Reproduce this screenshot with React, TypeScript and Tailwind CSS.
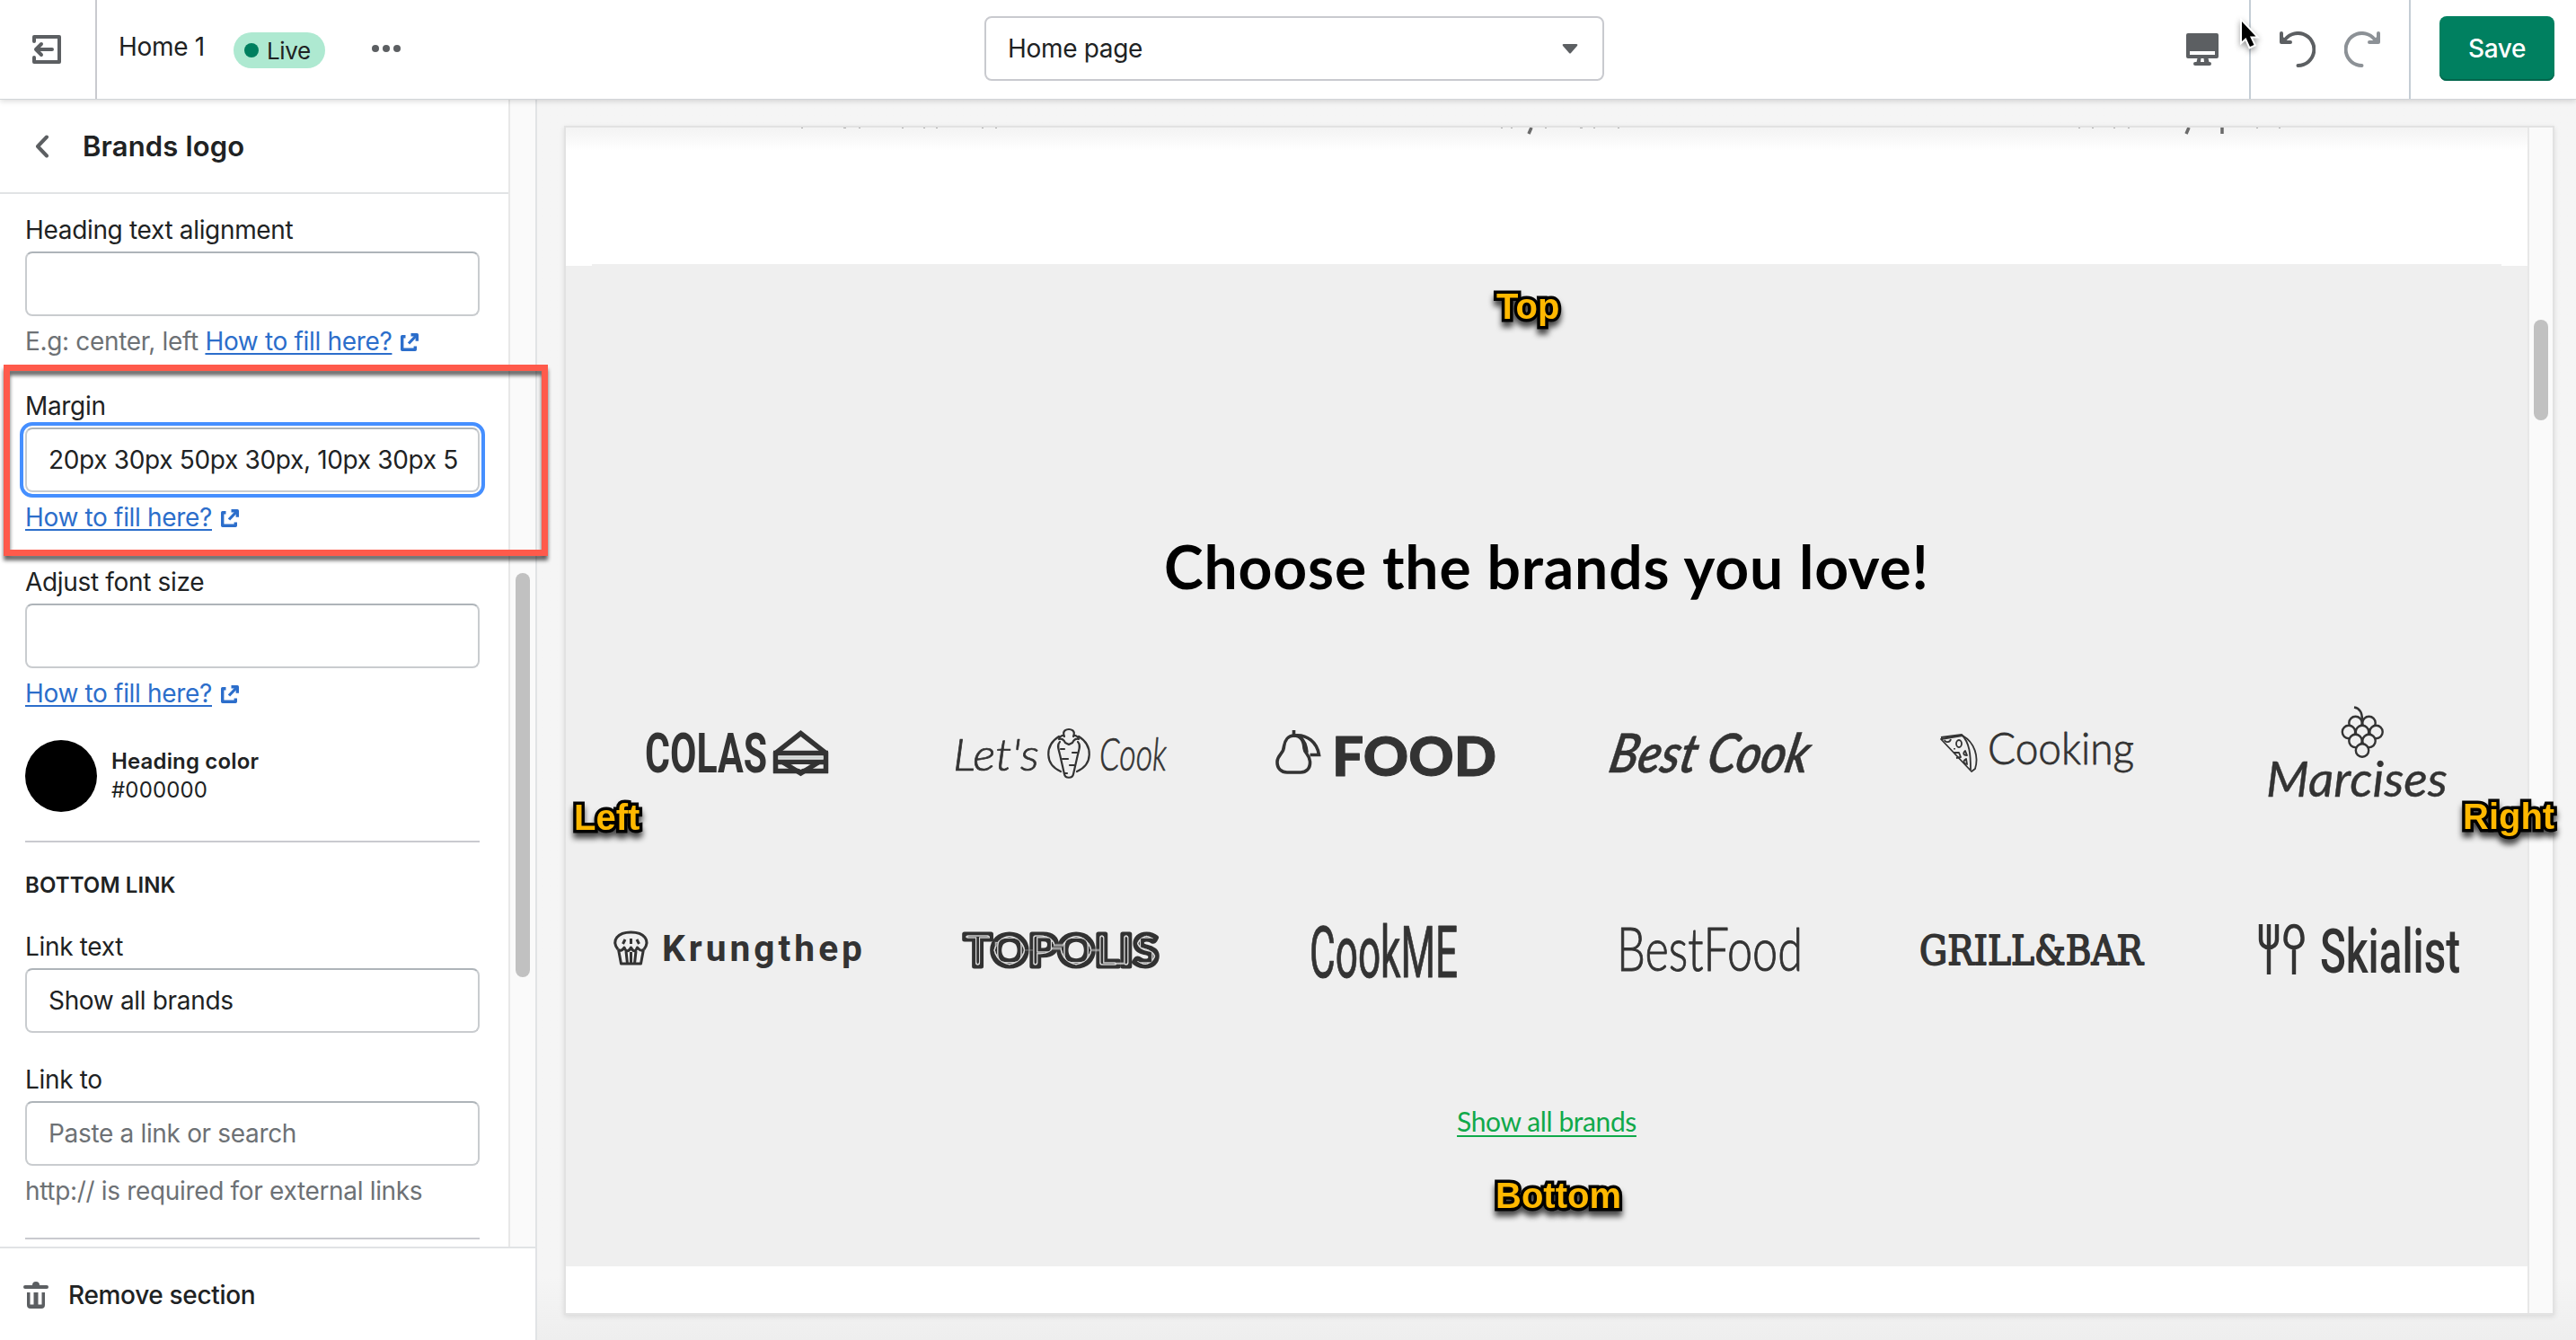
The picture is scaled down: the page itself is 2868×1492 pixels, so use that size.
import type { ReactNode } from "react";

const INK = "#333333";

const callouts = [
  { text: "Top", place: "left-[1666px] top-[321px]" },
  { text: "Left", place: "left-[639px] top-[890px]" },
  { text: "Right", place: "left-[2742px] top-[889px]" },
  { text: "Bottom", place: "left-[1665px] top-[1311px]" },
];

function App() {
  return (
    <div className="relative flex h-[1492px] w-[2868px] flex-col overflow-hidden bg-[#f5f5f5] font-[Inter,sans-serif] text-[28px] leading-[40px] tracking-[-0.33px] text-[#202223]">
      <TopBar />
      <div className="flex min-h-0 flex-1">
        <Sidebar />
        <Preview />
      </div>

      <div className="absolute left-[4px] top-[406px] h-[213px] w-[606px] border-[7px] border-[#ff5a4b] drop-shadow-[0_5px_2px_rgba(0,0,0,0.6)]"></div>
      {callouts.map((c) => (
        <div
          key={c.text}
          className={
            "absolute font-['Liberation_Sans',sans-serif] text-[40px] font-bold leading-none tracking-normal text-[#ffb800] drop-shadow-[0_6px_3px_rgba(0,0,0,0.7)] [-webkit-text-stroke:7px_black] [paint-order:stroke_fill] [stroke-linejoin:round] " +
            c.place
          }
        >
          {c.text}
        </div>
      ))}
      <svg
        className="absolute left-[2488px] top-[16px] z-20 drop-shadow-[0_3px_3px_rgba(0,0,0,0.4)]"
        width="34"
        height="44"
        viewBox="0 0 34 44"
      >
        <path
          d="M8 8v22l4.500-4 4.500 10 4.500-2-4.500-9.500h6.500z"
          fill="#000"
          stroke="#fff"
          strokeWidth="4"
          paintOrder="stroke"
        />
      </svg>
    </div>
  );
}

function TopBar() {
  return (
    <div className="z-10 flex h-[111px] shrink-0 border-b border-[#d2d5d8] bg-white shadow-[0_2px_6px_rgba(0,0,0,0.14)]">
      <div className="flex w-[108px] items-center border-r-2 border-[#c9cacf] pl-[36px]">
        <svg width="32" height="32" viewBox="0 0 32 32" fill="none" stroke="#5c5f62" strokeWidth="4" strokeLinecap="round" strokeLinejoin="round">
          <path d="M2 7V2h28v28H2v-5M22 16H4M10 10l-6 6 6 6" />
        </svg>
      </div>
      <div className="flex w-[988px] pl-[24px]">
        <div className="w-[97px] pt-[32px]">Home 1</div>
        <div className="ml-[31px] mt-[36px] flex h-[40px] w-[102px] items-center gap-[9px] rounded-full bg-[#aee9d1] pl-[12px] text-[26px]">
          <div className="h-[16px] w-[16px] rounded-full bg-[#007f5f]"></div>
          <div className="pt-[1px]">Live</div>
        </div>
        <div className="ml-[52px] mt-[50px] flex gap-1">
          <div className="h-[8px] w-[8px] rounded-full bg-[#5c5f62]"></div>
          <div className="h-[8px] w-[8px] rounded-full bg-[#5c5f62]"></div>
          <div className="h-[8px] w-[8px] rounded-full bg-[#5c5f62]"></div>
        </div>
      </div>
      <div className="mt-[18px] flex h-[72px] w-[690px] items-center justify-between rounded-lg border-2 border-[#c9cacf] pl-[24px] pr-[27px]">
        <span>Home page</span>
        <svg width="18" height="11" viewBox="0 0 18 11" fill="#5c5f62">
          <path d="M2 0h14q2 0 1 2l-7 8q-1 1-2 0L1 2Q0 0 2 0z" />
        </svg>
      </div>
      <div className="ml-auto flex">
        <div className="flex items-center border-r-2 border-[#c4cdd5] pr-[34px]">
          <svg width="36" height="36" viewBox="0 0 36 36" fill="#5c5f62">
            <path
              fillRule="evenodd"
              d="M2 0h32q2 0 2 2v24q0 2-2 2h-9.500l1 4H26q2 0 2 2t-2 2H10q-2 0-2-2t2-2h1.500l1-4H2q-2 0-2-2V2q0-2 2-2zM4 20v4h28v-4zM16.500 28l-.5 4h4l-.5-4z"
            />
          </svg>
        </div>
        <div className="flex items-center gap-[32px] border-r-2 border-[#c4cdd5] px-[32px]">
          <UndoIcon color="#5c5f62" />
          <div className="-scale-x-100">
            <UndoIcon color="#8c9196" />
          </div>
        </div>
        <div className="ml-[32px] mr-[24px] mt-[18px] flex h-[72px] w-[128px] items-center justify-center rounded-lg bg-[#008060] font-medium text-white shadow-[inset_0_-2px_0_#00664c]">
          Save
        </div>
      </div>
    </div>
  );
}

function UndoIcon({ color }: { color: string }) {
  return (
    <svg className="block" width="40" height="40" viewBox="0 0 40 40" fill="none" stroke={color} strokeWidth="4" strokeLinecap="round" strokeLinejoin="round">
      <path d="M20.500 38A18 18 0 1 0 4.500 11.500" />
      <path d="M2 2v10h10M2.500 7.500L7 12" />
    </svg>
  );
}

function Sidebar() {
  return (
    <div className="flex w-[598px] shrink-0 flex-col border-r-2 border-[#e1e3e5] bg-white">
      <div className="flex min-h-0 flex-1">
        <div className="flex w-[566px] flex-col overflow-hidden">
          <div className="flex h-[105px] shrink-0 items-center border-b-2 border-[#e1e3e5] pl-[39px]">
            <svg width="16" height="26" viewBox="0 0 16 26" fill="none" stroke="#5c5f62" strokeWidth="4" strokeLinecap="round" strokeLinejoin="round">
              <path d="M13 2.500L3 13l10 10.500" />
            </svg>
            <div className="ml-[37px] text-[31px] font-semibold tracking-[0.15px]">Brands logo</div>
          </div>
          <div className="flex flex-col gap-8 pl-[28px] pr-[32px] pt-[20px]">
            <Field label="Heading text alignment">
              E.g: center, left <HelpLink />
            </Field>
            <Field label="Margin" value="20px 30px 50px 30px, 10px 30px 5" focused>
              <HelpLink />
            </Field>
            <Field label="Adjust font size">
              <HelpLink />
            </Field>
            <div className="flex h-[80px] items-center">
              <div className="h-[80px] w-[80px] rounded-full bg-black"></div>
              <div className="ml-[16px] text-[24px] leading-[32px] tracking-[0.15px]">
                <div className="font-semibold">Heading color</div>
                <div>#000000</div>
              </div>
            </div>
            <div className="h-[2px] bg-[#c9cacf]"></div>
            <div className="text-[24px] font-semibold leading-[32px] tracking-[0.1px]">BOTTOM LINK</div>
            <Field label="Link text" value="Show all brands" />
            <Field label="Link to" placeholder="Paste a link or search">
              http:// is required for external links
            </Field>
            <div className="h-[2px] bg-[#c9cacf]"></div>
          </div>
        </div>
        <div className="flex w-[30px] justify-end border-l-2 border-[#e8e8e8] bg-[#fafafa] pr-[6px]">
          <div className="mt-[527px] h-[450px] w-[16px] rounded-full bg-[#c1c1c1]"></div>
        </div>
      </div>
      <div className="flex h-[104px] shrink-0 items-center border-t-2 border-[#e1e3e5] pl-[26px] pt-[2px]">
        <svg width="28" height="31" viewBox="0 0 28 31" fill="#5c5f62">
          <path d="M10 4q0-4 4-4t4 4h8q2 0 2 2t-2 2H2q-2 0-2-2t2-2z" />
          <path d="M4 12h3.500v13.500h4V12h3v13.500h0V12h2v13.500h4V12H24v14q0 4-4 4H8q-4 0-4-4z" />
        </svg>
        <div className="ml-[22px] font-medium">Remove section</div>
      </div>
    </div>
  );
}

type FieldProps = {
  label: string;
  value?: string;
  placeholder?: string;
  focused?: boolean;
  children?: ReactNode;
};

function Field(props: FieldProps) {
  return (
    <div className="flex flex-col">
      <div>{props.label}</div>
      <div
        className={
          "mt-1 flex h-[72px] items-center whitespace-nowrap rounded-lg border-2 border-[#c9cccf] border-t-[#aeb4b9] bg-white px-[24px] " +
          (props.focused ? "outline-4 outline-offset-2 outline-[#458fff]" : "")
        }
      >
        {props.value}
        <span className="text-[#6d7175]">{props.placeholder}</span>
      </div>
      {props.children && (
        <div className="mt-2 whitespace-nowrap text-[#6d7175]">{props.children}</div>
      )}
    </div>
  );
}

function HelpLink() {
  return (
    <span className="text-[#2c6ecb]">
      <span className="underline decoration-2 underline-offset-[3px]">How to fill here?</span>
      <svg className="ml-[10px] inline-block align-[-1px]" width="20" height="20" viewBox="0 0 20 20" fill="none" stroke="#2c6ecb" strokeWidth="3.400" strokeLinejoin="round">
        <path d="M5.500 3.700H1.700v14.600h14.600v-3.800M11.500 1.700h6.800v7" />
        <path d="M18 2L9 11.500" strokeWidth="3.200" />
      </svg>
    </span>
  );
}

function Preview() {
  return (
    <div className="flex flex-1 bg-linear-to-b from-[#f5f5f5] from-95% to-[#eeeeee] pb-[28px] pl-[30px] pr-[24px] pt-[29px]">
      <div className="flex flex-1 border-2 border-[#e2e2e2] bg-white shadow-[0_2px_6px_rgba(0,0,0,0.1)]">
        <div className="flex flex-1 flex-col">
          <div className="h-[152px] bg-linear-to-b from-[#f3f3f3] to-white to-[26px]">
            {/* descenders of the row that is scrolled out above */}
            <svg width="2184" height="10" viewBox="0 0 2184 10" stroke="#6b6b6b" strokeWidth="3.500">
              <path d="M1075 0l-3 7M1807 0l-3 7M1844 0v7" />
              <path d="M262 .5h2M309 .5h3M326 .5h2M374 .5h2M398 .5h2M412 .5h2M463 .5h2M478 .5h2M1041 .5h2M1052 .5h2M1090 .5h2M1129 .5h3M1144 .5h2M1171 .5h2M1684 .5h2M1699 .5h2M1723 .5h2M1739 .5h2M1882 .5h2M1907 .5h2" strokeWidth="1" opacity="0.500" />
            </svg>
          </div>
          <div className="mx-[29px] h-[2px] bg-[#efefef]"></div>
          <div className="flex h-[1114px] flex-col items-center bg-[#efefef] font-[Lato,sans-serif] tracking-normal">
            <div className="mt-[290px] whitespace-nowrap text-[66px] font-bold leading-[90px] tracking-[0.85px] text-black">
              Choose the brands you love!
            </div>
            <div className="mt-[54px] grid grid-cols-6">
              <Colas />
              <LetsCook />
              <Food />
              <BestCook />
              <Cooking />
              <Marcises />
              <Krungthep />
              <Topolis />
              <CookMe />
              <BestFood />
              <GrillBar />
              <Skialist />
            </div>
            <div className="mt-[60px] text-[30px] leading-[40px] tracking-[-0.4px] text-[#10a94a] underline decoration-2 underline-offset-[4px]">
              Show all brands
            </div>
          </div>
        </div>
        <div className="flex w-[28px] justify-center border-l-2 border-[#e8e8e8] bg-[#fafafa]">
          <div className="mt-[214px] h-[112px] w-[16px] rounded-full bg-[#c1c1c1]"></div>
        </div>
      </div>
    </div>
  );
}

// Every logo shares one sheet: 361 x 219 per cell, origin at 638,730.
function Logo({ box, children }: { box: string; children: ReactNode }) {
  return (
    <svg className="overflow-visible" width="361" height="219" viewBox={box} fill={INK}>
      {children}
    </svg>
  );
}

type WordProps = {
  x: number;
  y: number;
  w: number;
  size: number;
  className: string;
  bold?: number;
  children: string;
};

// w is the drawn width of the word, bold thickens the strokes a little
function Word({ x, y, w, size, className, bold, children }: WordProps) {
  return (
    <text
      x={x}
      y={y}
      fontSize={size}
      textLength={w}
      lengthAdjust="spacingAndGlyphs"
      stroke={bold ? INK : undefined}
      strokeWidth={bold}
      strokeLinejoin="round"
      className={className}
    >
      {children}
    </text>
  );
}

function Colas() {
  return (
    <Logo box="638 730 361 219">
      <Word x={717} y={859.5} w={136} size={61} className="font-[Roboto,sans-serif] font-bold">COLAS</Word>
      <g fill="none" stroke={INK} strokeWidth="5.500">
        <path d="M862.500 861V838.500L890.500 816.500L918.500 838.500V861" />
        <path d="M860 838.500h61M860 848.500h61M860 858.500h61" />
        <path d="M871 849l19.500 12 19.500-12" />
      </g>
      <path d="M881 851h19l-9.500 6z" fill="#efefef" />
      <path d="M865 843.500h51" stroke="#c9d0cd" strokeWidth="2" />
    </Logo>
  );
}

function LetsCook() {
  return (
    <Logo box="999 730 361 219">
      <Word x={1060} y={858} w={96} size={50} bold={0.7} className="font-[Lato,sans-serif] font-light italic">Let's</Word>
      <Word x={1223} y={858} w={75} size={52} bold={0.7} className="font-[Lato,sans-serif] font-light italic">Cook</Word>
      <g fill="none" stroke={INK} strokeWidth="2.200" strokeLinejoin="round" strokeLinecap="round">
        <path d="M1178 820c-16 10-16 31 2 39M1200 820c16 10 16 31-2 39" />
        <path d="M1179 826c-4 4-1 9 0 14l5 22c1 5 9 5 10 0l5-22c1-5 4-10 0-14" />
        <path d="M1178 823c1-4 5-5 6-3-3-7 3-8 5-8s8 1 5 8c1-2 5-1 6 3-3-1-5 0-7 4l-4 2-4-2c-2-4-4-5-7-4z" />
        <path d="M1180 834h4M1193 838h5M1182 845h6M1190 852h5M1184 861h3" />
      </g>
    </Logo>
  );
}

function Food() {
  return (
    <Logo box="1360 730 361 219">
      <Word x={1482} y={863.5} w={183} size={61} bold={1} className="font-[Lato,sans-serif] font-black">FOOD</Word>
      <g fill="none" stroke={INK} strokeWidth="3.600">
        <path d="M1439.500 819c-6 0-10 5-11 12 0 8-7 9-7.500 17-.3 8 5 12 11 12h15c6 0 11-4 10.500-12-.5-8-6-9-6.500-15-.5-8-4.500-14-11.500-14z" />
        <path d="M1439.500 813v6c15-2 26 8 28 21.500h-10M1446 820c6 6 7 10 8 18" />
      </g>
    </Logo>
  );
}

function BestCook() {
  return (
    <Logo box="1721 730 361 219">
      <g transform="translate(1788 860) skewX(-12)">
        <Word x={0} y={0} w={222} size={60} bold={0.5} className="font-[Lato,sans-serif] font-semibold italic">Best Cook</Word>
      </g>
    </Logo>
  );
}

function Cooking() {
  return (
    <Logo box="2082 730 361 219">
      <Word x={2212} y={850.5} w={163} size={49} bold={0.8} className="font-[Lato,sans-serif] font-light">Cooking</Word>
      <g fill="none" stroke={INK} strokeWidth="1.800" strokeLinejoin="round">
        <path d="M2160 823l24-4c14 8 18 24 14 37l-4 3z" />
        <path d="M2160 821l23-3c9 9 10 22 10 39M2164 824c1 3 6 3 7-1" />
        <ellipse cx="2180" cy="828" rx="3" ry="4" />
        <path d="M2187 836c-3 3-2 5 2 5zM2188 845c-4 2-3 5 1 6zM2174 838l6 0 2 5-5 1M2175 833v1.500" />
      </g>
    </Logo>
  );
}

function Marcises() {
  const grapes = [
    [2621.5, 805],
    [2636.5, 805],
    [2614, 815],
    [2629, 815],
    [2644.5, 815],
    [2621.5, 825],
    [2636.5, 825],
    [2629, 835.5],
  ];
  return (
    <Logo box="2443 730 361 219">
      <g fill="#efefef" stroke={INK} strokeWidth="2.400">
        {grapes.map(([cx, cy]) => (
          <circle key={`${cx}-${cy}`} cx={cx} cy={cy} r="7.200" />
        ))}
        <path d="M2620 787.500c6 1 9 6 9 14" fill="none" />
      </g>
      <Word x={2522} y={887} w={202} size={55} bold={0.4} className="font-[Lato,sans-serif] font-normal italic">Marcises</Word>
    </Logo>
  );
}

function Krungthep() {
  return (
    <Logo box="638 949 361 219">
      <Word x={736} y={1069.5} w={227} size={41} className="font-[Roboto,sans-serif] font-bold tracking-[4px]">Krungthep</Word>
      <g fill="none" stroke={INK} strokeWidth="3" strokeLinejoin="round">
        <path d="M687 1057c-8-10 0-19 14.500-19s22 9 14.500 19" />
        <path d="M687 1057c3 3 6 0 7-2 2 5 5 5 7.500 0 2.500 5 5 5 7 0 2 2 4 5 7.500 2M687.500 1057l3 16h22l3-16" />
        <path d="M696 1059l1.500 14M707 1059l-1.500 14M701.500 1060v13M695 1046l-2.500 5M701.500 1045v6M708 1046l2.500 5" />
      </g>
    </Logo>
  );
}

function Topolis() {
  return (
    <Logo box="999 949 361 219">
      <filter id="inline-line" x="-5%" y="-5%" width="110%" height="110%">
        <feMorphology in="SourceAlpha" operator="erode" radius="4" result="outer" />
        <feMorphology in="SourceAlpha" operator="erode" radius="5" result="inner" />
        <feComposite in="outer" in2="inner" operator="out" result="band" />
        <feFlood floodColor="#dedede" />
        <feComposite in2="band" operator="in" result="line" />
        <feMerge>
          <feMergeNode in="SourceGraphic" />
          <feMergeNode in="line" />
        </feMerge>
      </filter>
      <g filter="url(#inline-line)">
        <Word x={1072} y={1076} w={217} size={50} bold={5} className="font-[Lato,sans-serif] font-black">TOPOLIS</Word>
      </g>
    </Logo>
  );
}

function CookMe() {
  return (
    <Logo box="1360 949 361 219">
      <Word x={1457} y={1087.500} w={165} size={80} bold={1} className="font-[Roboto,sans-serif] font-normal">CookME</Word>
    </Logo>
  );
}

function BestFood() {
  return (
    <Logo box="1721 949 361 219">
      <Word x={1799} y={1081} w={207} size={67} bold={1} className="font-[Lato,sans-serif] font-light">BestFood</Word>
    </Logo>
  );
}

function GrillBar() {
  return (
    <Logo box="2082 949 361 219">
      <Word x={2136} y={1073.500} w={249} size={45} bold={1.8} className="font-['DejaVu_Serif',serif] font-normal">GRILL&amp;BAR</Word>
    </Logo>
  );
}

function Skialist() {
  return (
    <Logo box="2443 949 361 219">
      <g fill="none" stroke={INK} strokeWidth="4.400">
        <path d="M2516 1029v17c0 12 18 12 18 0v-17M2525 1029v56" />
        <path d="M2553 1055c-6 0-10-4-9.500-11 .5-8 4-13 9.500-13s9 5 9.500 13c.5 7-3.500 11-9.500 11zM2553 1055v30" />
      </g>
      <Word x={2582} y={1082.500} w={156} size={68} className="font-[Roboto,sans-serif] font-medium">Skialist</Word>
    </Logo>
  );
}

export default App;
